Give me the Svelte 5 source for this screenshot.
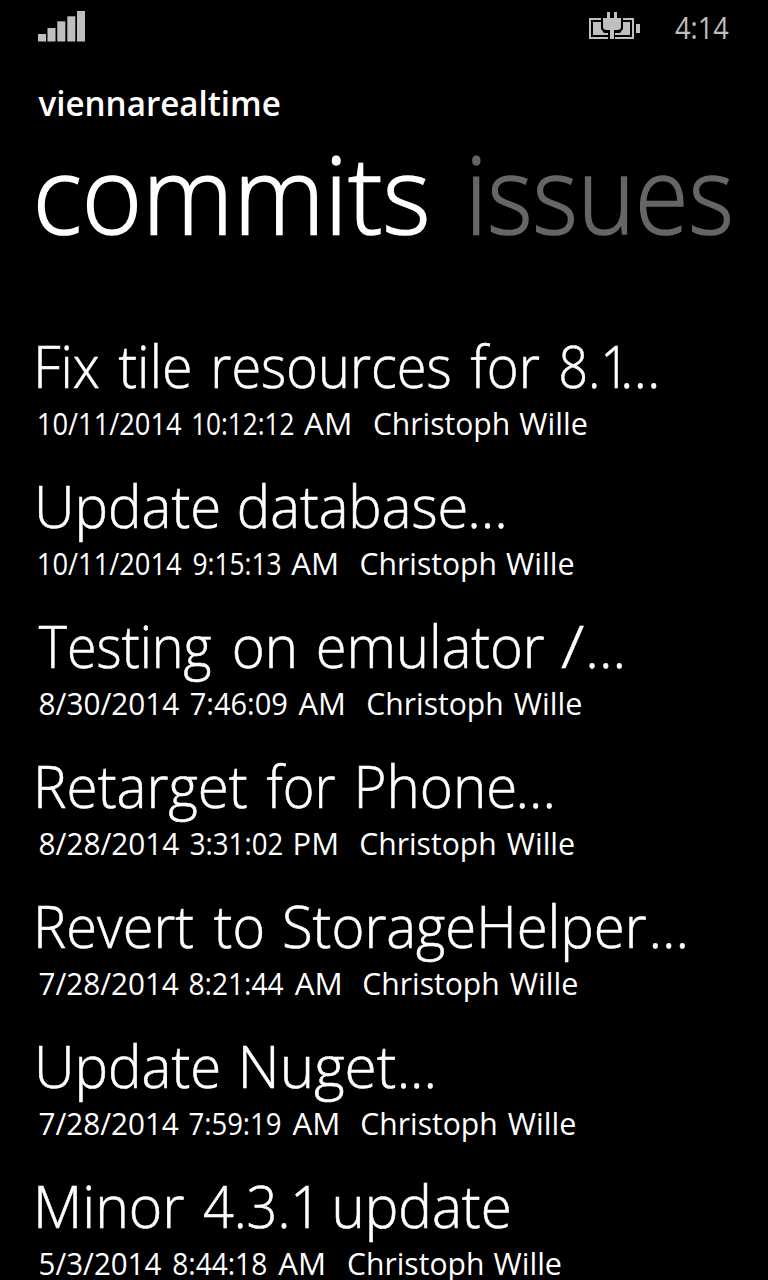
<script>
  // Each word carries the horizontal range that its ink covers.
  const commits = [
    { title: [['Fix', 38, 99.3], ['tile', 118, 191], ['resources', 214.3, 450.7], ['for', 470, 540.7], ['8.1', 560, 618.5], ['...', 623, 657.2]],
      meta: [['10/11/2014', 39, 181.7], ['10:12:12', 192.7, 293], ['AM', 303.7, 350.5]], author: 374 },
    { title: [['Update', 38, 219], ['database', 239, 466.7], ['...', 470, 504.3]],
      meta: [['10/11/2014', 39, 181.7], ['9:15:13', 192.3, 280], ['AM', 291.3, 337.7]], author: 361 },
    { title: [['Testing', 38, 212], ['on', 234.3, 295], ['emulator', 317.7, 545], ['/', 561.3, 585], ['...', 588.6, 623]],
      meta: [['8/30/2014', 39, 179], ['7:46:09', 190, 287.3], ['AM', 298, 344]], author: 368 },
    { title: [['Retarget', 38, 247.3], ['for', 266, 336.3], ['Phone', 358, 514.5], ['...', 518.3, 552.3]],
      meta: [['8/28/2014', 39, 179], ['3:31:02', 190, 282.7], ['PM', 295, 337]], author: 361 },
    { title: [['Revert', 38, 194], ['to', 212.7, 262.3], ['StorageHelper', 284, 647], ['...', 651, 685.3]],
      meta: [['7/28/2014', 39, 178.5], ['8:21:44', 188.7, 284], ['AM', 294, 340.5]], author: 364 },
    { title: [['Update', 38, 219], ['Nuget', 242.7, 396], ['...', 400, 434]],
      meta: [['7/28/2014', 39, 178.5], ['7:59:19', 188.7, 281], ['AM', 291.7, 338]], author: 362 },
    { title: [['Minor', 38, 184.7], ['4.3.1', 202.7, 308.7], ['update', 334.3, 509]],
      meta: [['5/3/2014', 40, 161.7], ['8:44:18', 172.7, 267], ['AM', 277.7, 324]], author: 348 }
  ];
  const authorWords = (x) => [['Christoph', x, x + 134], ['Wille', x + 145, x + 213]];

  // Finds the first and last inked column of a text, in a canvas.
  function inkRange(text, font) {
    const canvas = document.createElement('canvas');
    canvas.width = 900;
    canvas.height = 220;
    const ctx = canvas.getContext('2d', { willReadFrequently: true });
    ctx.font = font;
    ctx.fillText(text, 20, 150);
    const { data } = ctx.getImageData(0, 0, 900, 220);
    let lo = 900;
    let hi = 0;
    for (let y = 0; y < 220; y++) {
      for (let x = 0; x < 900; x++) {
        if (data[(y * 900 + x) * 4 + 3] > 40) {
          if (x < lo) lo = x;
          if (x > hi) hi = x;
        }
      }
    }
    return [lo - 20, hi + 1 - 20];
  }

  // Condenses or widens a word so that its ink, stroke included, spans the given range.
  function fit(node, [from, to]) {
    const cs = getComputedStyle(node);
    const [lo, hi] = inkRange(node.textContent, `${cs.fontWeight} ${cs.fontSize} ${cs.fontFamily}`);
    const edge = (parseFloat(cs.webkitTextStrokeWidth) || 0) / 2;
    const left = lo - edge;
    const s = (to - from - 1) / (hi + edge - left);
    const origin = node.getBoundingClientRect().left;
    node.style.transform = `translateX(${from + 0.5 - origin - left * s}px) scaleX(${s})`;
  }
</script>

<main class="phone">
  <div class="status">
    <svg class="signal" width="48" height="32" viewBox="0 0 48 32" fill="#bfbfbf">
      <rect x="0" y="24" width="8" height="7.5" />
      <rect x="9.5" y="18" width="8" height="13.5" />
      <rect x="19.3" y="11.3" width="8" height="20.2" />
      <rect x="29.3" y="6.3" width="8" height="25.2" />
      <rect x="39" y="1" width="8" height="30.5" />
    </svg>
    <svg class="battery" width="52" height="28" viewBox="0 0 52 28">
      <path d="M1 7H44V26H1Z" fill="none" stroke="#bfbfbf" stroke-width="2" />
      <path d="M4 10H41V23H4Z" fill="#bfbfbf" />
      <path d="M12 4H34V17L31 21H26V28H19V21H15L12 17Z" fill="#000" />
      <path d="M18 0H21V6H25V0H28V6H32V15Q32 18 28 18H25V27H21V18H18Q14 18 14 15V6H18Z" fill="#bfbfbf" />
      <rect x="47" y="12" width="4" height="9" fill="#bfbfbf" />
    </svg>
    <span class="clock fit" use:fit={[674.5, 729]}>4:14</span>
  </div>
  <header>
    <h2><span class="fit" use:fit={[38, 280.5]}>viennarealtime</span></h2>
    <nav>
      <span class="fit" use:fit={[37.3, 427.5]}>commits</span>
      <span class="fit other" use:fit={[471.7, 731.2]}>issues</span>
    </nav>
  </header>
  <ul>
    {#each commits as c}
      <li>
        <div class="title">
          {#each c.title as [word, from, to]}<span class="fit" use:fit={[from, to]}>{word}</span>{/each}
        </div>
        <div class="meta">
          {#each [...c.meta, ...authorWords(c.author)] as [word, from, to]}<span class="fit" use:fit={[from, to]}>{word}</span>{/each}
        </div>
      </li>
    {/each}
  </ul>
</main>

<style>
  :global(body) { background: #000; overflow: hidden; }
  .phone {
    width: 768px; height: 1280px; overflow: hidden; box-sizing: border-box;
    background: #000; color: #fff; font-family: "Open Sans", sans-serif;
  }
  .fit { display: inline-block; white-space: pre; transform-origin: 0 50%; }
  .status { display: flex; height: 60px; padding: 10px 38px 0; box-sizing: border-box; align-items: flex-start; }
  .battery { flex: none; margin: 2px 35px 0 auto; }
  .clock { font-size: 31px; line-height: 34px; color: #bfbfbf; font-weight: 400; flex: none; width: 61px; margin-right: -7px; }
  h2 { margin: 0; padding: 18px 38px 0; font-size: 35px; line-height: 50px; font-weight: 600; height: 50px; }
  nav { display: flex; gap: 36px; padding: 0 37px; height: 191px; font-size: 107px; line-height: 130px; font-weight: 300; -webkit-text-stroke-width: 1.6px; }
  .other { color: #666; }
  ul { list-style: none; margin: 0; padding: 10px 37px 0; }
  li { height: 140px; }
  .title { display: flex; gap: 16px; font-size: 59px; line-height: 72px; height: 72px; font-weight: 300; -webkit-text-stroke-width: 0.6px; }
  .meta { display: flex; gap: 8px; font-size: 31px; line-height: 44px; font-weight: 400; }
</style>
